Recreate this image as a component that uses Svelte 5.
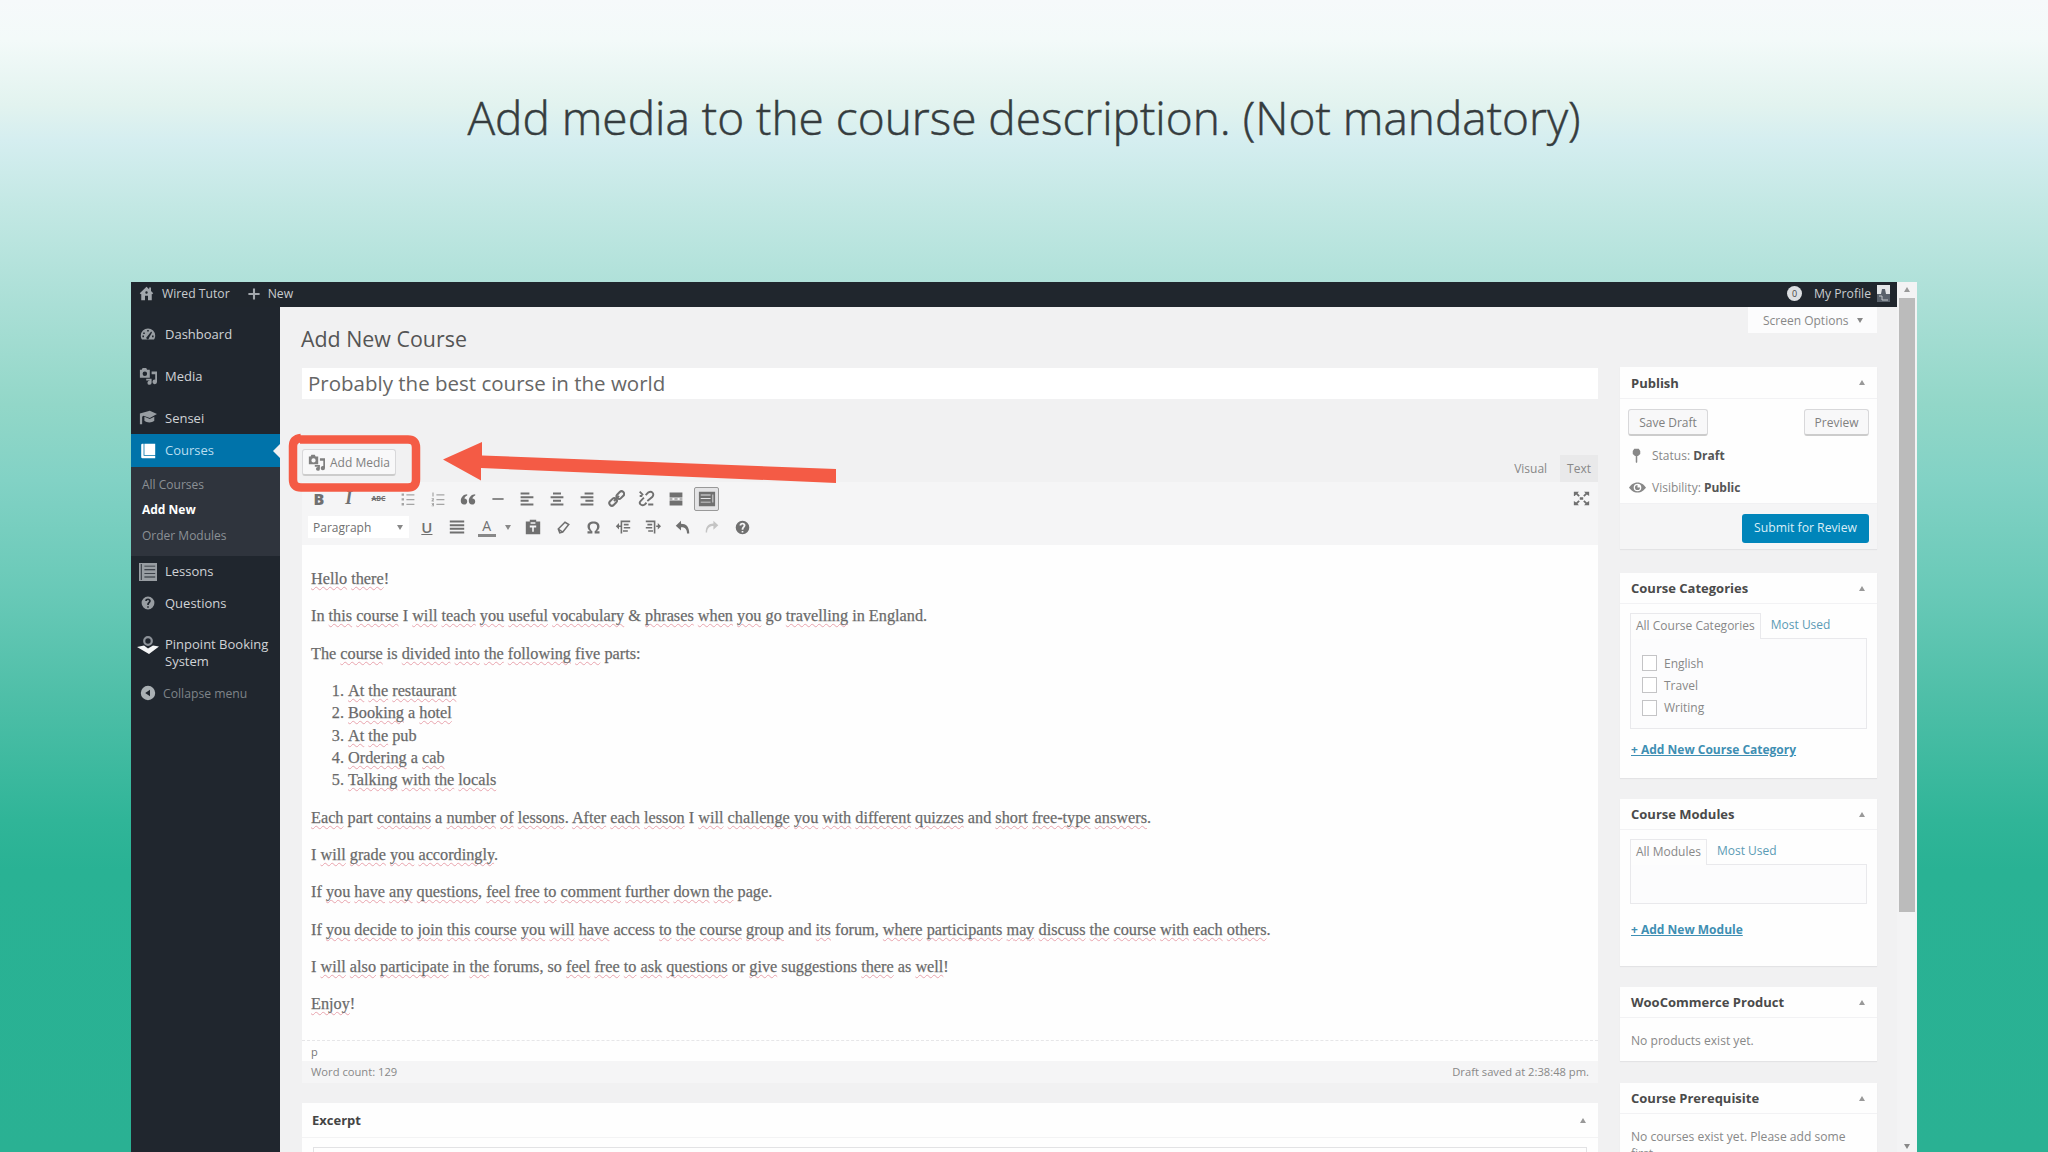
<script>
	// 20x20 glyphs, filled with the current text colour
	const icons = {
		home: 'M10 1 1 9.5l1.5 1.5L3 10.5V19h5v-6h4v6h5v-8.500l.5.5L19 9.500l-3-3V2h-2.500v2.200zM10 7a1.600 1.600 0 1 1 0 3.200A1.600 1.600 0 0 1 10 7z',
		plus: 'M8.500 2h3v6.500H18v3h-6.500V18h-3v-6.500H2v-3h6.500z',
		dashboard: 'M10 3a9 9 0 0 0-9 9c0 2 .6 3.700 1.500 5h15c.9-1.300 1.500-3 1.500-5a9 9 0 0 0-9-9zm-1 2h2v2H9zM4 8h2v2H4zm-1 4h2v2H3zm12 0h2v2h-2zm-1-5 1 1-3.500 6.500a1.800 1.800 0 1 1-2.500-1.500z',
		media: 'M1 3h2l1-2h4l1 2h3v9H1zm5.500 2a2.500 2.500 0 1 0 0 5 2.500 2.500 0 0 0 0-5zM14 5h6v11.500a2.500 2.500 0 1 1-2-2.400V8h-4zM8 13h6v4.500a2.300 2.300 0 1 1-2-2.300V15H8z',
		cap: 'M1 5l11-3 8 3.500-8 4.500-7-2.500-1.500 1V17H1zM6 8.500l6 2.500 5-2.500V13c-3 2.500-8 2.500-11 0z',
		book: 'M3 1h1.500v15H19v3H3a1.500 1.500 0 0 1-1.500-1.500v-15A1.500 1.500 0 0 1 3 1zm2.500 0H19v14H5.500z',
		list: 'M0 0h20v20H0zM6 3v1h12V3zm0 4v1h12V7zm0 4v1h12v-1zm0 4v1h12v-1zM2 1v18h1V1z',
		help: 'M10 2a8 8 0 1 0 0 16 8 8 0 0 0 0-16zm-1 12h2v2H9zm-2.500-6.500C6.500 5.500 8 4.500 10 4.500s3.500 1.100 3.500 3c0 2.100-2.500 2.500-2.500 5H9c0-3.500 2.200-3.500 2.200-5 0-.7-.5-1.100-1.200-1.100-.8 0-1.300.4-1.300 1.100z',
		collapse: 'M10 1a9 9 0 1 0 0 18 9 9 0 0 0 0-18zm2.500 5v8L6.500 10z',
		ul: 'M2 3h3v3H2zm0 6h3v3H2zm0 6h3v3H2zM8 4h10v1.500H8zm0 6h10v1.500H8zm0 6h10v1.500H8z',
		ol: 'M3 2h1.500v5H3zM2 9h3v1.500L3.500 12H5v1H2v-1l1.500-2H2zm0 6h3v4H2v-1h2v-.6H2.500v-1H4V16H2zM8 4h10v1.500H8zm0 6h10v1.500H8zm0 6h10v1.500H8z',
		quote: 'M9 4C4.500 4 1 7.500 1 12.500 1 15 2.500 17 5 17s4-1.700 4-4-1.500-3.700-3.500-3.700C6 7.500 7 6 9 5.500zm10 0c-4.500 0-8 3.500-8 8.500 0 2.500 1.500 4.500 4 4.500s4-1.700 4-4-1.500-3.700-3.500-3.700C16 7.500 17 6 19 5.500z',
		hr: 'M3 9h14v2H3z',
		left: 'M2 2h11v2.500H2zm0 4.500h16V9H2zM2 11h10v2.500H2zm0 4.500h16V18H2z',
		center: 'M5 2h10v2.500H5zM2 6.500h16V9H2zM5 11h10v2.500H5zm-3 4.500h16V18H2z',
		right: 'M7 2h11v2.500H7zM2 6.500h16V9H2zM8 11h10v2.500H8zm-6 4.500h16V18H2z',
		justify: 'M1 2h18v2.500H1zm0 4.500h18V9H1zM1 11h18v2.500H1zm0 4.500h18V18H1z',
		more: 'M2 2h16v6H2zm0 10h16v6H2zM2 9.300h3.500v1.400H2zm6 0h4v1.400H8zm6.500 0H18v1.400h-3.500z',
		kitchen: 'M1 2h18v16H1zm2 3v1h11V5zm0 4v1h11V9zm0 4v1h11v-1zm13-8v9h1V5z',
		paste: 'M6 1h8v2h5v16H1V3h5zm1 3v2h6V4zM6 8v2.500h3V16h2v-5.500h3V8z',
		omega: 'M2 15h4C3.500 13.500 2 11.500 2 8.500 2 4.500 5 2 10 2s8 2.500 8 6.500c0 3-1.500 5-4 6.500h4v3h-6.500v-3c2-1.200 3.300-3.300 3.300-6.300S13 4.500 10 4.500 5.200 5.700 5.200 8.700s1.300 5.100 3.300 6.300v3H2z',
		outdent: 'M9 2h10v2H9zm2 4h6v2h-6zm0 4h8v2h-8zm-1 4h6v2h-6zM7 2h2v16H7zM5 5v3h2v2H5v3L1 9z',
		indent: 'M1 2h10v2H1zm2 4h6v2H3zm-2 4h8v2H1zm3 4h6v2H4zM11 2h2v16h-2zm5 3v3h-2v2h2v3l4-4z',
		undo: 'M8 1v4c7 0 11 4 11 13h-3c0-6-2.500-8.500-8-8.500V14L1 7.500z',
		redo: 'M12 1v4C5 5 1 9 1 18h2c0-6 3-9.500 9-9.500V14l7-6.500z',
		expand: 'M1 2h6L5.300 3.700 8 6.500 6.500 8 3.700 5.300 2 7H1zm18 0v5l-2.700-1.700L13.500 8 12 6.500l2.700-2.800L13 2zM1 18v-5l2.700 1.700L6.500 12 8 13.500l-2.700 2.800L7 18zm18 0h-6l1.700-1.700-2.700-2.800 1.500-1.500 2.800 2.700L19 13zM8 8.500h4v3H8z',
		pin: 'M7 1h6l2 3v4l-3 2.500h-1V19l-1 1-1-1v-8.500H8L5 8V4z',
		eye: 'M10 4C5.500 4 2 7 0 10c2 3 5.500 6 10 6s8-3 10-6c-2-3-5.500-6-10-6zm0 1.500a4.500 4.500 0 1 1 0 9 4.500 4.500 0 0 1 0-9zM10 7a3 3 0 1 0 3 3h-3z'
	};

	const row1 = ['ul', 'ol', 'quote', 'hr', 'left', 'center', 'right'];

	// words that start with ~ pass the spell checker
	const intro = [
		'Hello there!',
		'~In this course ~I will teach you useful vocabulary ~& phrases when you ~go travelling ~in ~England.',
		'~The course ~is divided into the following five ~parts:'
	];
	const parts = ['At the restaurant', 'Booking ~a hotel', 'At the ~pub', 'Ordering ~a cab', 'Talking with the locals'];
	const outro = [
		'Each ~part contains ~a number of lessons. After each lesson ~I will challenge you with different quizzes ~and short free-type answers.',
		'~I will grade you accordingly.',
		'~If you have any questions, feel free to comment further down the ~page.',
		'~If you decide to join this course you will have ~access to the course group ~and its ~forum, where participants may discuss the course with each others.',
		'~I will also participate ~in the ~forums, ~so feel free to ask questions ~or give ~suggestions there ~as well!',
		'Enjoy!'
	];

	function split(line) {
		return line.split(' ').map((w) => {
			if (w[0] === '~') return { ok: w.slice(1), bad: '' };
			const m = w.match(/^(.*?)([.,!:]?)$/);
			return { bad: m[1], ok: m[2] };
		});
	}
</script>

{#snippet icon(name, size = 16)}
	<svg class="icon" width={size} height={size} viewBox="0 0 20 20"><path fill="currentColor" fill-rule="evenodd" d={icons[name]} /></svg>
{/snippet}

{#snippet words(line)}
	{#each split(line) as w, i}{i ? ' ' : ''}{#if w.bad}<span class="bad">{w.bad}</span>{/if}{w.ok}{/each}
{/snippet}

{#snippet boxHead(title)}
	<div class="box-head"><b>{title}</b><i class="up"></i></div>
{/snippet}

<div class="slide">
	<h1>Add media to the course description. (Not mandatory)</h1>

	<div class="screen">
		<div class="page">
			<div class="adminbar">
				{@render icon('home', 15)}<span class="site">Wired Tutor</span>
				{@render icon('plus', 14)}<span>New</span>
				<span class="count">0</span><span class="me">My Profile</span>
				<svg class="avatar" width="13" height="17" viewBox="0 0 13 17">
					<rect width="13" height="17" fill="#e4e6e8" />
					<path d="M0 9h4l1-5h3l1 5h4v8H0z" fill="#59616b" />
					<path d="M2 11h3v4h6" stroke="#c3c7cb" fill="none" />
				</svg>
			</div>
			<div class="body">
				<nav>
					<div class="item top">{@render icon('dashboard')}Dashboard</div>
					<div class="item media">{@render icon('media', 18)}Media</div>
					<div class="item sensei">{@render icon('cap', 18)}Sensei</div>
					<div class="item current">{@render icon('book')}Courses</div>
					<div class="sub">
						<div>All Courses</div>
						<div class="on">Add New</div>
						<div>Order Modules</div>
					</div>
					<div class="item lessons">{@render icon('list', 18)}Lessons</div>
					<div class="item">{@render icon('help')}Questions</div>
					<div class="item pinpoint">
						<svg class="icon" width="22" height="21" viewBox="0 0 22 21">
							<circle cx="11" cy="6" r="3.800" fill="none" stroke="#8d9299" stroke-width="2.200" />
							<path d="M0 12l7-1.500 4 3 5-3 6 1-10 7.500z" fill="#f4f5f6" />
						</svg>
						Pinpoint Booking System
					</div>
					<div class="item fold">{@render icon('collapse')}Collapse menu</div>
				</nav>

				<main>
					<h2>Add New Course</h2>
					<div class="title-input">Probably the best course in the world</div>

					<div class="tools">
						<div class="btn add">
							{@render icon('media', 17)}<span>Add Media</span>
							<svg class="marks" width="560" height="70" viewBox="0 0 560 70">
								<path d="M12 7.500h108q8 0 8 8v32q0 8-8 8H13q-8 0-8-8V14q0-7 8-8" fill="none" stroke="#f45b45" stroke-width="8.500" />
								<path d="M155 27.500 194 10v13.500L548 37v14L193 36v12.500z" fill="#f45b45" />
							</svg>
						</div>
						<span class="tab">Visual</span><span class="tab off">Text</span>
					</div>

					<div class="toolbar">
						<div class="row">
							<span class="t b">B</span><span class="t it">I</span><span class="t abc">ABC</span>
							{#each row1 as name}
								<span class="t" class:pale={name === 'ul' || name === 'ol'}>{@render icon(name, 16)}</span>
							{/each}
							<span class="t"><svg class="icon" width="17" height="17" viewBox="0 0 20 20" fill="none" stroke="currentColor" stroke-width="2.400"><rect x="9.500" y="3" width="10" height="6" rx="3" transform="rotate(-45 14.500 6)" /><rect x="1" y="11" width="10" height="6" rx="3" transform="rotate(-45 6 14)" /><path d="M7 13l6-6" /></svg></span>
							<span class="t"><svg class="icon" width="17" height="17" viewBox="0 0 20 20" fill="none" stroke="currentColor" stroke-width="2.200"><path d="M9 6l3-3q3-2 5 0t0 5l-6 5M7 9l-4 4q-2 2 0 4t5 0l2-2M2 2l4 4M2 7h3M12 17h6" /></svg></span>
							<span class="t">{@render icon('more', 16)}</span>
							<span class="t pressed">{@render icon('kitchen', 18)}</span>
							<span class="full">{@render icon('expand', 17)}</span>
						</div>
						<div class="row second">
							<span class="select">Paragraph<i class="down"></i></span>
							<span class="t u">U</span>
							<span class="t">{@render icon('justify', 16)}</span>
							<span class="t color">A</span><span class="caret"><i class="down"></i></span>
							<span class="t">{@render icon('paste', 16)}</span>
							<span class="t"><svg class="icon" width="15" height="15" viewBox="0 0 20 20" fill="none" stroke="currentColor" stroke-width="2"><path d="M3 12 12 3l5 3-8 10-4 1zM3 12l6 4" /></svg></span>
							<span class="t">{@render icon('omega', 15)}</span>
							<span class="t">{@render icon('outdent', 16)}</span>
							<span class="t">{@render icon('indent', 16)}</span>
							<span class="t">{@render icon('undo', 15)}</span>
							<span class="t faint">{@render icon('redo', 14)}</span>
							<span class="t">{@render icon('help', 17)}</span>
						</div>
					</div>

					<article>
						{#each intro as line}<p>{@render words(line)}</p>{/each}
						<ol>
							{#each parts as line}<li>{@render words(line)}</li>{/each}
						</ol>
						{#each outro as line}<p>{@render words(line)}</p>{/each}
					</article>
					<div class="path">p</div>
					<div class="status"><span>Word count: 129</span><span>Draft saved at 2:38:48 pm.</span></div>

					<div class="excerpt">
						<div class="excerpt-head"><b>Excerpt</b><i class="up"></i></div>
						<div class="excerpt-input"></div>
					</div>
				</main>

				<aside>
					<div class="options">Screen Options<i class="down"></i></div>
					<section class="publish">
						{@render boxHead('Publish')}
						<div class="buttons"><span class="btn">Save Draft</span><span class="btn">Preview</span></div>
						<div class="meta">{@render icon('pin', 15)}<span>Status: <b>Draft</b></span></div>
						<div class="meta">{@render icon('eye', 17)}<span>Visibility: <b>Public</b></span></div>
						<div class="submit"><span>Submit for Review</span></div>
					</section>

					<section class="cats">
						{@render boxHead('Course Categories')}
						<div class="tabs"><span class="sel">All Course Categories</span><span class="link">Most Used</span></div>
						<div class="panel">
							{#each ['English', 'Travel', 'Writing'] as cat}
								<div class="check"><i></i>{cat}</div>
							{/each}
						</div>
						<div class="addnew">+ Add New Course Category</div>
					</section>

					<section class="mods">
						{@render boxHead('Course Modules')}
						<div class="tabs"><span class="sel">All Modules</span><span class="link">Most Used</span></div>
						<div class="panel"></div>
						<div class="addnew">+ Add New Module</div>
					</section>

					<section class="woo">
						{@render boxHead('WooCommerce Product')}
						<div class="note">No products exist yet.</div>
					</section>

					<section class="pre">
						{@render boxHead('Course Prerequisite')}
						<div class="note">No courses exist yet. Please add some first.</div>
					</section>
				</aside>
			</div>
		</div>
		<div class="scroll"><i class="up"></i><div class="thumb"></div><i class="down"></i></div>
	</div>
</div>

<style>
	:global(body) {
		overflow: hidden;
	}
	.slide {
		width: 2048px;
		height: 1152px;
		overflow: hidden;
		display: flex;
		flex-direction: column;
		box-sizing: border-box;
		font-family: 'Open Sans', 'Noto Sans', sans-serif;
		background: linear-gradient(#f6f9fb 0, #f3faf9 40px, #e2f3ef 105px, #d5eef0 140px, #c3e8e4 205px, #aadfd6 305px, #92d7c8 405px, #82d2c5 480px, #68c9b7 595px, #4fbfa8 695px, #30b598 820px, #29b294 870px, #2ab193 100%);
	}
	h1 {
		margin: 82px 0 0;
		height: 200px;
		line-height: 70px;
		text-align: center;
		font-size: 46px;
		font-weight: 300;
		color: #353c3e;
		-webkit-text-stroke: 0.5px #353c3e;
		white-space: nowrap;
		flex: none;
	}
	.screen {
		display: flex;
		margin-left: 131px;
		width: 1786px;
		height: 870px;
		background: #f1f1f2;
		font-size: 12px;
		color: #777;
	}
	.page {
		width: 1766px;
		display: flex;
		flex-direction: column;
	}
	.icon {
		display: block;
		flex: none;
	}
	.adminbar {
		box-sizing: border-box;
		height: 25px;
		display: flex;
		align-items: center;
		background: #20262d;
		color: #c9cccf;
		font-size: 12.200px;
		padding: 0 7px 2px 8px;
		white-space: nowrap;
	}
	.adminbar .icon {
		color: #a3a8ad;
	}
	.site {
		margin: 0 17px 0 8px;
	}
	.adminbar .icon + span:not(.site) {
		margin-left: 7px;
	}
	.count {
		margin-left: auto;
		width: 15px;
		height: 15px;
		line-height: 15px;
		border-radius: 8px;
		background: #dcdfe2;
		color: #444;
		font-size: 9px;
		text-align: center;
	}
	.me {
		margin: 0 6px 0 12px;
	}
	.body {
		display: flex;
		flex: 1;
		min-height: 0;
	}
	nav {
		width: 149px;
		background: #20262e;
		color: #d0d3d6;
		font-size: 13px;
		flex: none;
	}
	.item {
		display: flex;
		align-items: center;
		height: 32px;
		padding-left: 34px;
		position: relative;
		line-height: 17px;
	}
	.item .icon {
		margin: 0 9px 0 -25px;
		color: #989da2;
	}
	.item .icon[width='18'] {
		margin: 0 8px 0 -26px;
	}
	.top {
		margin-top: 11px;
	}
	.media {
		margin-top: 10px;
	}
	.sensei {
		margin-top: 10px;
	}
	.current {
		height: 33px;
		background: #0073aa;
		color: #b9def0;
	}
	.item.current .icon {
		color: #fff;
	}
	.current::after {
		content: '';
		position: absolute;
		right: 0;
		border: 7px solid transparent;
		border-right-color: #f1f1f2;
		border-left: 0;
	}
	.sub {
		box-sizing: border-box;
		height: 89px;
		padding: 5px 0 0 11px;
		background: #2f343d;
		color: #8b9095;
		font-size: 12px;
		line-height: 25.300px;
	}
	.sub .on {
		color: #fff;
		font-weight: 700;
	}
	.lessons {
		height: 31px;
	}
	.pinpoint {
		height: 34px;
		margin: 17px 0 7px;
	}
	.pinpoint .icon {
		margin: -16px 6px 0 -28px;
	}
	.fold {
		color: #7e8388;
		font-size: 12.200px;
	}
	.item.fold .icon {
		color: #aab0b4;
		margin-right: 7px;
	}
	main {
		width: 1296px;
		margin: 0 22px;
		flex: none;
	}
	h2 {
		margin: 16px 0 13px -1px;
		height: 32px;
		line-height: 32px;
		font-size: 21.400px;
		font-weight: 400;
		color: #555;
	}
	.title-input {
		height: 31px;
		line-height: 31px;
		padding-left: 6px;
		background: #fff;
		font-size: 20.500px;
		color: #666;
	}
	.tools {
		display: flex;
		align-items: flex-end;
		height: 83px;
	}
	.btn {
		display: flex;
		align-items: center;
		justify-content: center;
		box-sizing: border-box;
		border: 1px solid #d8d8da;
		border-bottom: 2px solid #ccc;
		border-radius: 3px;
		background: #f8f8f9;
		height: 27px;
		color: #808080;
		white-space: nowrap;
	}
	.add {
		position: relative;
		width: 94px;
		margin: 0 auto 6px 0;
		gap: 5px;
		font-size: 12px;
	}
	.marks {
		position: absolute;
		left: -15px;
		top: -18px;
	}
	.tab {
		height: 27px;
		line-height: 27px;
		padding: 0 13px 0 12px;
		font-size: 12px;
		color: #888;
	}
	.off {
		background: #e9e9ea;
		padding: 0 7px;
	}
	.toolbar {
		height: 63px;
		background: #f5f5f6;
		color: #707070;
	}
	.row {
		display: flex;
		align-items: center;
		height: 33px;
		padding-left: 2px;
	}
	.second {
		height: 24px;
		padding-left: 6px;
	}
	.t {
		width: 29.800px;
		height: 24px;
		display: flex;
		align-items: center;
		justify-content: center;
		flex: none;
	}
	.b {
		font-size: 16px;
		font-weight: 800;
	}
	.it {
		font: italic bold 18px 'Liberation Serif', serif;
	}
	.abc {
		font-size: 7px;
		font-weight: 700;
		text-decoration: line-through;
	}
	.pale {
		color: #a5a5a5;
	}
	.faint {
		color: #c4c4c4;
	}
	.pressed {
		box-sizing: border-box;
		width: 25px;
		margin-left: 3px;
		border: 1px solid #999;
		border-radius: 2px;
		background: #e4e4e6;
	}
	.full {
		margin: 0 8px 0 auto;
	}
	.select {
		width: 101px;
		height: 22px;
		box-sizing: border-box;
		padding: 0 6px 0 5px;
		display: flex;
		align-items: center;
		justify-content: space-between;
		background: #fff;
		font-size: 12px;
		margin-right: 3px;
	}
	.u {
		font-size: 15px;
		font-weight: 600;
		text-decoration: underline;
	}
	.color {
		width: 18px;
		height: 16px;
		line-height: 14px;
		margin-left: 6px;
		font-size: 14px;
		border-bottom: 3px solid #888;
	}
	.caret {
		width: 24px;
		display: flex;
		justify-content: center;
		margin-right: -1px;
	}
	.up,
	.down {
		width: 0;
		border: 3.500px solid transparent;
		border-top-width: 0;
		border-bottom: 5px solid #999;
	}
	.down {
		border-bottom: 0;
		border-top: 5px solid #888;
	}
	article {
		height: 472px;
		padding: 23px 9px 0;
		background: #fefefe;
		font-family: 'Liberation Serif', serif;
		font-size: 16.250px;
		line-height: 22.350px;
		color: #666;
		-webkit-text-stroke: 0.250px #777;
	}
	p,
	ol {
		margin: 0 0 15px;
		white-space: nowrap;
	}
	ol {
		padding-left: 37px;
	}
	.bad {
		text-decoration: underline wavy #e8a3ad 1px;
		text-underline-offset: 2px;
		text-decoration-skip-ink: none;
	}
	.path {
		height: 20px;
		line-height: 22px;
		padding-left: 9px;
		border-top: 1px dashed #e6e6e8;
		background: #fefefe;
		font-size: 11px;
	}
	.status {
		display: flex;
		justify-content: space-between;
		height: 22px;
		line-height: 22px;
		padding: 0 9px;
		background: #f5f5f6;
		font-size: 11.200px;
		color: #888;
	}
	.excerpt {
		margin-top: 20px;
		height: 60px;
		background: #fefefe;
	}
	.excerpt-head {
		display: flex;
		justify-content: space-between;
		align-items: center;
		height: 34px;
		padding: 0 12px 0 10px;
		border-bottom: 1px solid #f3f3f4;
		font-size: 13px;
		color: #444;
	}
	.excerpt-input {
		margin: 9px 11px;
		height: 30px;
		border: 1px solid #e2e2e4;
	}
	aside {
		width: 257px;
		color: #888;
		flex: none;
	}
	.options {
		display: flex;
		align-items: center;
		justify-content: space-between;
		box-sizing: border-box;
		width: 129px;
		height: 26px;
		padding: 0 14px 0 15px;
		margin: 0 0 34px auto;
		background: #fcfcfd;
		font-size: 12px;
		white-space: nowrap;
	}
	section {
		box-sizing: border-box;
		background: #fefefe;
		box-shadow: 0 1px 1px #e3e3e5;
	}
	.publish {
		height: 182px;
		margin-bottom: 24px;
	}
	.cats {
		height: 205px;
		margin-bottom: 21px;
	}
	.mods {
		height: 167px;
		margin-bottom: 21px;
	}
	.woo {
		height: 74px;
		margin-bottom: 22px;
	}
	.pre {
		height: 90px;
	}
	.box-head {
		display: flex;
		justify-content: space-between;
		align-items: center;
		height: 30px;
		padding: 0 12px 0 11px;
		border-bottom: 1px solid #f2f2f4;
		color: #4a4a4a;
		font-size: 13px;
	}
	.publish .box-head {
		height: 31px;
	}
	.buttons {
		display: flex;
		justify-content: space-between;
		padding: 10px 8px 3px;
	}
	.buttons .btn {
		width: 80px;
	}
	.buttons .btn + .btn {
		width: 65px;
	}
	.meta {
		display: flex;
		align-items: center;
		height: 32px;
		padding-left: 9px;
		gap: 8px;
	}
	.meta b {
		color: #555;
	}
	.meta .icon[width='17'] {
		margin-right: -2px;
	}
	.submit {
		display: flex;
		justify-content: flex-end;
		align-items: center;
		height: 46px;
		padding: 4px 8px 0 0;
		box-sizing: border-box;
		box-shadow: inset 0 1px #f1f1f3;
		background: #f5f5f6;
	}
	.submit span {
		width: 127px;
		height: 29px;
		line-height: 28px;
		text-align: center;
		background: #0085ba;
		border-radius: 3px;
		color: #d9eef7;
		font-size: 12.200px;
	}
	.tabs {
		display: flex;
		height: 26px;
		line-height: 24px;
		margin: 9px 10px 0;
		white-space: nowrap;
	}
	.sel {
		padding: 0 5px;
		border: 1px solid #e9e9ec;
		border-bottom: 0;
		background: #fdfdfd;
	}
	.link {
		margin-left: 10px;
		color: #5b9bb5;
	}
	.panel {
		box-sizing: border-box;
		height: 91px;
		margin: -1px 10px 0;
		padding: 13px 11px;
		border: 1px solid #e9e9ec;
		background: #fcfcfd;
	}
	.mods .panel {
		height: 40px;
	}
	.check {
		display: flex;
		align-items: center;
		height: 22.300px;
	}
	.check i {
		box-sizing: border-box;
		width: 15px;
		height: 16px;
		margin-right: 7px;
		border: 1px solid #c4c4c6;
		background: #fff;
	}
	.addnew {
		margin: 11px 11px 0;
		line-height: 20px;
		font-weight: 700;
		color: #3f8fb3;
		text-decoration: underline;
	}
	.mods .addnew {
		margin-top: 16px;
	}
	.note {
		padding: 14px 11px;
		line-height: 17px;
		font-size: 12.100px;
	}
	.scroll {
		width: 20px;
		display: flex;
		flex-direction: column;
		align-items: center;
		background: #f3f3f4;
	}
	.scroll .up {
		margin-top: 5px;
	}
	.thumb {
		width: 16px;
		height: 614px;
		margin-top: 6px;
		background: #bbb;
	}
	.scroll .down {
		margin: auto 0 3px;
	}
</style>
